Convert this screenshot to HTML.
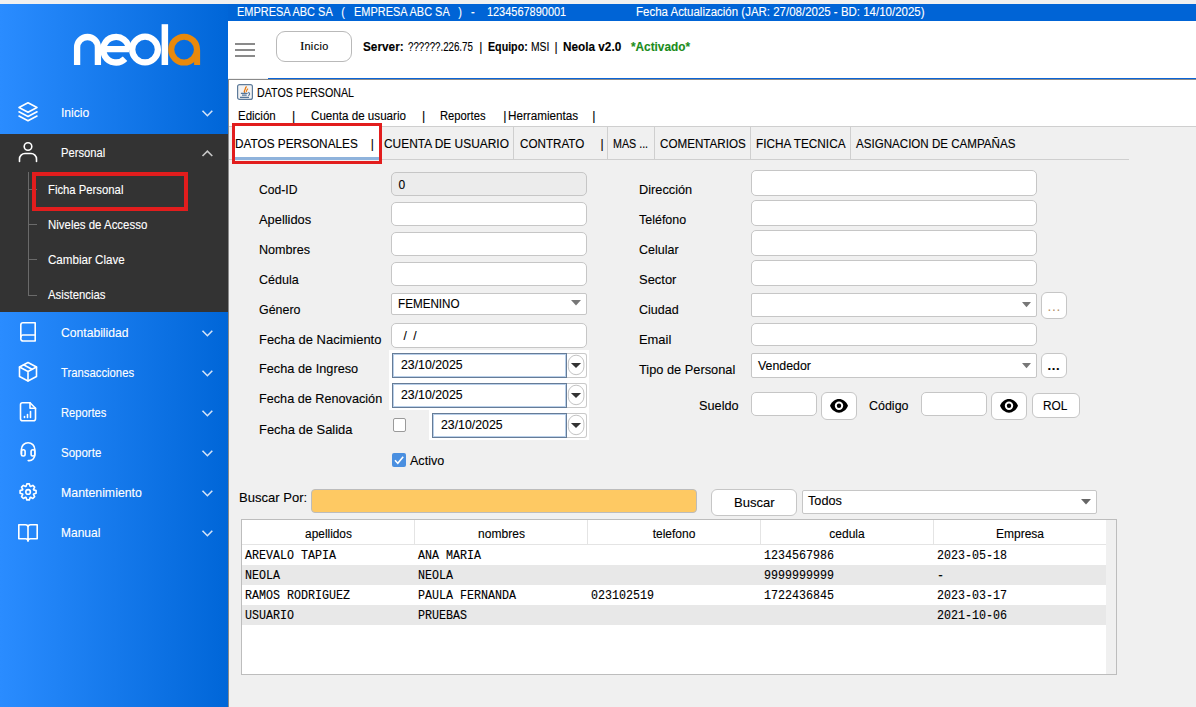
<!DOCTYPE html>
<html><head><meta charset="utf-8">
<style>
*{box-sizing:border-box;margin:0;padding:0}
html,body{width:1196px;height:707px;overflow:hidden;background:#f0f0f0;font-family:"Liberation Sans",sans-serif;position:relative}
.a{position:absolute}
.t{position:absolute;white-space:pre;line-height:1;-webkit-text-stroke:0.12px currentColor}
#sb{left:0;top:4px;width:228px;height:703px;background:linear-gradient(90deg,#2a8cff 0%,#0066d8 100%)}
#dark{left:0;top:134px;width:228px;height:178px;background:#333333}
.mi{color:#fff;font-size:12.5px}
.sub{color:#fff;font-size:12.5px}
.chev{position:absolute;width:10px;height:6px}
.lbl{font-size:13.5px;color:#111}
.inp{position:absolute;background:#fff;border:1px solid #c6c6c6;border-radius:5px}
.cmb{position:absolute;background:#fff;border:1px solid #c6c6c6;border-radius:2px}
.btn{position:absolute;background:#fff;border:1px solid #c6c6c6;border-radius:6px}
.tab{font-size:12.5px;color:#111}
.sep{position:absolute;top:127px;width:1px;height:32px;background:#cfcfcf}
.mono{font-family:"Liberation Mono",monospace;font-size:11.67px;color:#111}
.th{font-size:12.5px;color:#111}
.dp{position:absolute;background:#fff;border:1px solid #667c97;box-shadow:inset 0 0 0 1px #b9d0ea}
.dpb{position:absolute;background:#fff;border:1px solid #c9c9c9;border-left:none;border-radius:0 3px 3px 0}
</style></head><body>
<!-- top strip -->
<div class="a" style="left:0;top:0;width:1196px;height:4px;background:#f0f0f0"></div>
<!-- sidebar -->
<div id="sb" class="a"></div>
<div id="dark" class="a"></div>
<!-- logo -->
<svg class="a" style="left:0;top:0" width="228" height="80" viewBox="0 0 228 80">
 <g fill="none" stroke="#fff" stroke-width="6.3">
  <path d="M77.1 65 V47.4 A10.4 10.4 0 0 1 97.9 47.4 V65"/>
  <path d="M101.5 49.2 H129 M128.8 49.7 A12.8 12.8 0 1 0 125.05 58.75"/>
  <circle cx="145.05" cy="49.55" r="12.85"/>
 </g>
 <rect x="161.6" y="24.2" width="6.5" height="40.8" fill="#fff"/>
 <g fill="none" stroke="#e8890c" stroke-width="6.1">
  <circle cx="184.1" cy="49.6" r="12.9"/>
 </g>
 <rect x="194.1" y="49.6" width="6" height="15.4" fill="#e8890c"/>
</svg>
<!-- menu items -->
<!-- tree -->
<div class="a" style="left:28px;top:172px;width:1px;height:124px;background:#6a6a6a"></div>
<div class="a" style="left:29px;top:189px;width:8px;height:1px;background:#6a6a6a"></div>
<div class="a" style="left:29px;top:224px;width:8px;height:1px;background:#6a6a6a"></div>
<div class="a" style="left:29px;top:259px;width:8px;height:1px;background:#6a6a6a"></div>
<div class="a" style="left:29px;top:295px;width:8px;height:1px;background:#6a6a6a"></div>
<div class="a" style="left:32px;top:172px;width:156px;height:39px;border:4px solid #e21d1d"></div>
<!-- chevrons -->
<svg class="a" style="left:0;top:0" width="228" height="707" viewBox="0 0 228 707">
 <g fill="none" stroke="#d6e4f7" stroke-width="1.6">
  <path d="M202.5 110.8 L207.4 115.7 L212.3 110.8"/>
  <path d="M202.5 330.8 L207.4 335.7 L212.3 330.8"/>
  <path d="M202.5 370.8 L207.4 375.7 L212.3 370.8"/>
  <path d="M202.5 410.8 L207.4 415.7 L212.3 410.8"/>
  <path d="M202.5 450.8 L207.4 455.7 L212.3 450.8"/>
  <path d="M202.5 490.8 L207.4 495.7 L212.3 490.8"/>
  <path d="M202.5 530.8 L207.4 535.7 L212.3 530.8"/>
 </g>
 <path d="M202.5 156 L207.4 151.1 L212.3 156" fill="none" stroke="#c8c8c8" stroke-width="1.6"/>
 <g fill="none" stroke="#fff" stroke-width="1.6" stroke-linejoin="round" stroke-linecap="round">
  <!-- layers -->
  <path d="M28 102.8 L37 107.5 L28 112.2 L19 107.5 Z"/>
  <path d="M19 111.8 L28 116.5 L37 111.8"/>
  <path d="M19 116 L28 120.7 L37 116"/>
  <!-- person -->
  <circle cx="28" cy="146.5" r="3.8"/>
  <path d="M19.5 161.5 V159 A5.5 5.5 0 0 1 25 153.5 H31 A5.5 5.5 0 0 1 36.5 159 V161.5"/>
  <!-- book -->
  <path d="M23 322.8 H35.2 V341 H23 A2.2 2.2 0 0 1 20.8 338.8 V325 A2.2 2.2 0 0 1 23 322.8 Z"/>
  <path d="M20.8 337.2 A2.2 2.2 0 0 1 23 335 H35.2"/>
  <!-- box -->
  <path d="M28 362.5 L36.5 367 V376.5 L28 381 L19.5 376.5 V367 Z"/>
  <path d="M19.5 367 L28 371.5 L36.5 367 M28 371.5 V381"/>
  <path d="M23.5 364.8 L32 369.2"/>
  <!-- report -->
  <path d="M22.5 402.8 H30 L35.5 408.3 V418.8 A2 2 0 0 1 33.5 420.8 H22.5 A2 2 0 0 1 20.5 418.8 V404.8 A2 2 0 0 1 22.5 402.8 Z"/>
  <path d="M30 402.8 V408.3 H35.5"/>
  <path d="M24.5 417.5 V416.5 M27.5 417.5 V414.5 M30.5 417.5 V411.5"/>
  <!-- headset -->
  <path d="M21.4 454 V449.4 A6.7 6.7 0 0 1 34.8 449.4 V455 A5.6 5.6 0 0 1 29.2 460.6 H28.2"/>
  <rect x="21.4" y="449.8" width="3.7" height="6.2" rx="1.7"/>
  <rect x="31.1" y="449.8" width="3.7" height="6.2" rx="1.7"/>
  <!-- gear -->
  <circle cx="28.1" cy="491.9" r="2.3"/>
  <path d="M26.08 486.36 L26.83 483.90 L29.37 483.90 L30.12 486.36 L30.59 486.55 L32.86 485.35 L34.65 487.14 L33.45 489.41 L33.64 489.88 L36.10 490.63 L36.10 493.17 L33.64 493.92 L33.45 494.39 L34.65 496.66 L32.86 498.45 L30.59 497.25 L30.12 497.44 L29.37 499.90 L26.83 499.90 L26.08 497.44 L25.61 497.25 L23.34 498.45 L21.55 496.66 L22.75 494.39 L22.56 493.92 L20.10 493.17 L20.10 490.63 L22.56 489.88 L22.75 489.41 L21.55 487.14 L23.34 485.35 L25.61 486.55 Z"/>
  <!-- open book -->
  <path d="M28 526.5 V540.5 M18.8 524.8 H25.5 A2.5 2.5 0 0 1 28 527.3 A2.5 2.5 0 0 1 30.5 524.8 H37.2 V538.8 H30.5 A2.5 2.5 0 0 0 28 541.3 A2.5 2.5 0 0 0 25.5 538.8 H18.8 Z"/>
 </g>
</svg>
<!-- top blue bar on main -->
<div class="a" style="left:228px;top:4px;width:968px;height:17px;background:#0064d6"></div>
<!-- header white -->
<div class="a" style="left:228px;top:21px;width:968px;height:57px;background:#fff"></div>
<div class="a" style="left:235px;top:43px;width:20px;height:2px;background:#8a8a8a"></div>
<div class="a" style="left:235px;top:49px;width:20px;height:2px;background:#8a8a8a"></div>
<div class="a" style="left:235px;top:55px;width:20px;height:2px;background:#8a8a8a"></div>
<div class="btn" style="left:276px;top:31px;width:76px;height:31px;border-radius:9px;border-color:#b9b9b9"></div>
<!-- frame lines -->
<div class="a" style="left:268px;top:78px;width:928px;height:1px;background:#0a64d8"></div>
<div class="a" style="left:228px;top:79px;width:968px;height:1px;background:#8a8a8a"></div>
<div class="a" style="left:228px;top:79px;width:1px;height:628px;background:#8a8a8a"></div>
<div class="a" style="left:229px;top:80px;width:967px;height:46px;background:#fff"></div>
<div class="a" style="left:229px;top:126px;width:967px;height:1px;background:#cfcfcf"></div>
<div class="a" style="left:229px;top:159px;width:900px;height:1px;background:#cfcfcf"></div>
<!-- java icon -->
<svg class="a" style="left:237px;top:84px" width="16" height="16" viewBox="0 0 16 16">
 <rect x="0.6" y="0.6" width="14.8" height="14.8" rx="2" fill="#f2f2f2" stroke="#5d7b9b" stroke-width="1.2"/>
 <path d="M9.6 2.6 C8 4 8.6 5 7.6 6.4 C7 7.4 7.4 8.4 8 9" fill="none" stroke="#e87a10" stroke-width="1.3"/>
 <path d="M11 4.6 C10 5.6 9.6 6.2 9.2 7.8" fill="none" stroke="#e87a10" stroke-width="1.1"/>
 <path d="M3.9 9.4 H10.6 M5 11.1 H9.7 M3 13.4 H12 M11.3 8.3 Q14 10 11.3 11.7" fill="none" stroke="#56779a" stroke-width="1.1"/>
</svg>
<!-- tabs -->
<div class="a" style="left:232px;top:126px;width:148px;height:31px;background:#fff"></div>
<div class="a" style="left:232px;top:157px;width:148px;height:3px;background:#8fb3dc"></div>
<div class="sep" style="left:513px"></div>
<div class="sep" style="left:607px"></div>
<div class="sep" style="left:653.5px"></div>
<div class="sep" style="left:750px"></div>
<div class="sep" style="left:850px"></div>
<div class="a" style="left:232px;top:123px;width:150px;height:41px;border:3px solid #e21d1d"></div>
<!-- left labels -->
<!-- left inputs -->
<div class="inp" style="left:391px;top:172px;width:196px;height:24px;background:#ececec"></div>
<div class="inp" style="left:391px;top:202px;width:196px;height:24px"></div>
<div class="inp" style="left:391px;top:232px;width:196px;height:24px"></div>
<div class="inp" style="left:391px;top:262px;width:196px;height:24px"></div>
<div class="cmb" style="left:391px;top:292.5px;width:196px;height:22px"></div>
<svg class="a" style="left:571px;top:300px" width="11" height="6"><path d="M0 0 H10 L5 5.5 Z" fill="#777"/></svg>
<div class="inp" style="left:391px;top:322.5px;width:196px;height:25px"></div>
<!-- date pickers -->
<div class="a" style="left:389px;top:350px;width:200px;height:60px;background:#fff"></div>
<div class="a" style="left:429px;top:410px;width:160px;height:30px;background:#fff"></div>
<div class="dp" style="left:392px;top:353px;width:175px;height:24.5px"></div>
<div class="dpb" style="left:567px;top:352.5px;width:19.5px;height:25px"></div>
<div class="dp" style="left:392px;top:383px;width:175px;height:24.5px"></div>
<div class="dpb" style="left:567px;top:382.5px;width:19.5px;height:25px"></div>
<div class="dp" style="left:432px;top:413px;width:135px;height:24.5px"></div>
<div class="dpb" style="left:567px;top:412.5px;width:19.5px;height:25px"></div>
<svg class="a" style="left:566px;top:350px" width="22" height="92" viewBox="0 0 22 92">
 <g fill="none" stroke="#c4c4c4" stroke-width="1">
  <rect x="2.3" y="5.2" width="15.6" height="19.5" rx="7.8"/>
  <rect x="2.3" y="35.2" width="15.6" height="19.5" rx="7.8"/>
  <rect x="2.3" y="65.2" width="15.6" height="19.5" rx="7.8"/>
 </g>
 <g fill="#333">
  <path d="M4.9 13 H15.1 L10 18 Z"/>
  <path d="M4.9 43 H15.1 L10 48 Z"/>
  <path d="M4.9 73 H15.1 L10 78 Z"/>
 </g>
</svg>
<div class="a" style="left:392.5px;top:418px;width:13.5px;height:13.5px;border:1px solid #9a9a9a;border-radius:2px;background:#fff"></div>
<div class="a" style="left:392px;top:453px;width:14px;height:14px;border-radius:2px;background:#4a8fe0"></div>
<svg class="a" style="left:392px;top:453px" width="14" height="14"><path d="M3 7.3 L5.8 10.2 L11.2 3.8" fill="none" stroke="#fff" stroke-width="1.6"/></svg>
<!-- right labels -->
<!-- right inputs -->
<div class="inp" style="left:751px;top:170px;width:286px;height:25.5px"></div>
<div class="inp" style="left:751px;top:200px;width:286px;height:25.5px"></div>
<div class="inp" style="left:751px;top:230px;width:286px;height:25.5px"></div>
<div class="inp" style="left:751px;top:260px;width:286px;height:25.5px"></div>
<div class="cmb" style="left:751px;top:292.5px;width:286px;height:24px"></div>
<svg class="a" style="left:1022px;top:302px" width="10" height="6"><path d="M0 0 H9 L4.5 5.3 Z" fill="#777"/></svg>
<div class="btn" style="left:1041px;top:292px;width:25.5px;height:27px"></div>
<div class="inp" style="left:751px;top:322.5px;width:286px;height:23px"></div>
<div class="cmb" style="left:751px;top:352.5px;width:286px;height:25.5px"></div>
<svg class="a" style="left:1022px;top:363px" width="10" height="6"><path d="M0 0 H9 L4.5 5.3 Z" fill="#777"/></svg>
<div class="btn" style="left:1041px;top:352.5px;width:25.5px;height:25.5px"></div>
<!-- sueldo row -->
<div class="inp" style="left:751px;top:392px;width:65.5px;height:23.5px"></div>
<div class="btn" style="left:821px;top:392px;width:35.5px;height:27.5px"></div>
<div class="inp" style="left:921px;top:392px;width:65.5px;height:23.5px"></div>
<div class="btn" style="left:991px;top:392px;width:35.5px;height:27.5px"></div>
<svg class="a" style="left:829px;top:398px" width="20" height="16" viewBox="0 0 20 16">
 <path d="M1 7.8 C4.6 -1.3 15.4 -1.3 19 7.8 C15.4 16.9 4.6 16.9 1 7.8 Z" fill="#000"/>
 <circle cx="10" cy="7.8" r="4.2" fill="#fff"/><circle cx="10" cy="7.8" r="2.2" fill="#000"/>
</svg>
<svg class="a" style="left:999px;top:398px" width="20" height="16" viewBox="0 0 20 16">
 <path d="M1 7.8 C4.6 -1.3 15.4 -1.3 19 7.8 C15.4 16.9 4.6 16.9 1 7.8 Z" fill="#000"/>
 <circle cx="10" cy="7.8" r="4.2" fill="#fff"/><circle cx="10" cy="7.8" r="2.2" fill="#000"/>
</svg>
<div class="btn" style="left:1031.5px;top:392.5px;width:48px;height:25px"></div>
<!-- search -->
<div class="a" style="left:311px;top:489px;width:386px;height:24px;background:#fec963;border:1px solid #bcbcbc;border-radius:4px"></div>
<div class="btn" style="left:711px;top:489px;width:85.5px;height:26.5px"></div>
<div class="cmb" style="left:801.5px;top:490px;width:295.5px;height:24px"></div>
<svg class="a" style="left:1081px;top:499px" width="11" height="6"><path d="M0 0 H10 L5 5.5 Z" fill="#666"/></svg>
<!-- table -->
<div class="a" style="left:241px;top:519px;width:876px;height:156px;border:1px solid #bdbdbd;background:#f0f0f0"></div>
<div class="a" style="left:242px;top:520px;width:864px;height:154px;background:#fff"></div>
<div class="a" style="left:242px;top:544px;width:864px;height:1px;background:#e4e4e4"></div>
<div class="a" style="left:414px;top:520px;width:1px;height:24px;background:#e4e4e4"></div>
<div class="a" style="left:587px;top:520px;width:1px;height:24px;background:#e4e4e4"></div>
<div class="a" style="left:760px;top:520px;width:1px;height:24px;background:#e4e4e4"></div>
<div class="a" style="left:933px;top:520px;width:1px;height:24px;background:#e4e4e4"></div>
<div class="a" style="left:242px;top:565px;width:864px;height:20px;background:#e8e8e8"></div>
<div class="a" style="left:242px;top:605px;width:864px;height:20px;background:#e8e8e8"></div>
<div class="t" id="t0" style="left:60.60px;top:106.15px;font-size:13px;font-family:'Liberation Sans',sans-serif;color:#ffffff;font-weight:normal;transform:scaleX(0.9322);transform-origin:0 0;">Inicio</div>
<div class="t" id="t1" style="left:60.60px;top:145.75px;font-size:13px;font-family:'Liberation Sans',sans-serif;color:#ffffff;font-weight:normal;transform:scaleX(0.8614);transform-origin:0 0;">Personal</div>
<div class="t" id="t2" style="left:48.30px;top:182.85px;font-size:13px;font-family:'Liberation Sans',sans-serif;color:#ffffff;font-weight:normal;transform:scaleX(0.8695);transform-origin:0 0;">Ficha Personal</div>
<div class="t" id="t3" style="left:48.30px;top:217.85px;font-size:13px;font-family:'Liberation Sans',sans-serif;color:#ffffff;font-weight:normal;transform:scaleX(0.8808);transform-origin:0 0;">Niveles de Accesso</div>
<div class="t" id="t4" style="left:48.30px;top:252.95px;font-size:13px;font-family:'Liberation Sans',sans-serif;color:#ffffff;font-weight:normal;transform:scaleX(0.8920);transform-origin:0 0;">Cambiar Clave</div>
<div class="t" id="t5" style="left:48.30px;top:287.55px;font-size:13px;font-family:'Liberation Sans',sans-serif;color:#ffffff;font-weight:normal;transform:scaleX(0.8745);transform-origin:0 0;">Asistencias</div>
<div class="t" id="t6" style="left:60.66px;top:326.15px;font-size:13px;font-family:'Liberation Sans',sans-serif;color:#ffffff;font-weight:normal;transform:scaleX(0.9339);transform-origin:0 0;">Contabilidad</div>
<div class="t" id="t7" style="left:60.66px;top:366.15px;font-size:13px;font-family:'Liberation Sans',sans-serif;color:#ffffff;font-weight:normal;transform:scaleX(0.8696);transform-origin:0 0;">Transacciones</div>
<div class="t" id="t8" style="left:60.66px;top:406.15px;font-size:13px;font-family:'Liberation Sans',sans-serif;color:#ffffff;font-weight:normal;transform:scaleX(0.8588);transform-origin:0 0;">Reportes</div>
<div class="t" id="t9" style="left:60.66px;top:446.15px;font-size:13px;font-family:'Liberation Sans',sans-serif;color:#ffffff;font-weight:normal;transform:scaleX(0.8848);transform-origin:0 0;">Soporte</div>
<div class="t" id="t10" style="left:60.66px;top:486.15px;font-size:13px;font-family:'Liberation Sans',sans-serif;color:#ffffff;font-weight:normal;transform:scaleX(0.9486);transform-origin:0 0;">Mantenimiento</div>
<div class="t" id="t11" style="left:60.66px;top:526.15px;font-size:13px;font-family:'Liberation Sans',sans-serif;color:#ffffff;font-weight:normal;transform:scaleX(0.9217);transform-origin:0 0;">Manual</div>
<div class="t" id="t12" style="left:237.40px;top:6.18px;font-size:12.5px;font-family:'Liberation Sans',sans-serif;color:#ffffff;font-weight:normal;transform:scaleX(0.8774);transform-origin:0 0;">EMPRESA ABC SA   (   EMPRESA ABC SA   )   -    1234567890001</div>
<div class="t" id="t13" style="left:636.40px;top:6.18px;font-size:12.5px;font-family:'Liberation Sans',sans-serif;color:#ffffff;font-weight:normal;transform:scaleX(0.9186);transform-origin:0 0;">Fecha Actualización (JAR: 27/08/2025 - BD: 14/10/2025)</div>
<div class="t" id="t14" style="left:299.60px;top:41.29px;font-size:10.6px;font-family:'Liberation Sans',sans-serif;color:#000;font-weight:normal;transform:scaleX(1.0254);transform-origin:0 0;"><span style="font-family:'Liberation Serif',serif;font-size:13px;line-height:0">I</span><span style="letter-spacing:0.35px">nicio</span></div>
<div class="t" id="t15" style="left:363.20px;top:41.40px;font-size:12px;font-family:'Liberation Sans',sans-serif;color:#000;font-weight:bold;transform:scaleX(0.9837);transform-origin:0 0;">Server:</div>
<div class="t" id="t16" style="left:407.70px;top:41.40px;font-size:12px;font-family:'Liberation Sans',sans-serif;color:#000;font-weight:normal;transform:scaleX(0.8103);transform-origin:0 0;">??????.226.75</div>
<div class="t" id="t17" style="left:479.30px;top:41.40px;font-size:12px;font-family:'Liberation Sans',sans-serif;color:#000;font-weight:normal;">|</div>
<div class="t" id="t18" style="left:488.30px;top:41.40px;font-size:12px;font-family:'Liberation Sans',sans-serif;color:#000;font-weight:bold;transform:scaleX(0.8890);transform-origin:0 0;">Equipo:</div>
<div class="t" id="t19" style="left:531.40px;top:41.40px;font-size:12px;font-family:'Liberation Sans',sans-serif;color:#000;font-weight:normal;transform:scaleX(0.8621);transform-origin:0 0;">MSI</div>
<div class="t" id="t20" style="left:554.60px;top:41.40px;font-size:12px;font-family:'Liberation Sans',sans-serif;color:#000;font-weight:normal;">|</div>
<div class="t" id="t21" style="left:563.40px;top:41.40px;font-size:12px;font-family:'Liberation Sans',sans-serif;color:#000;font-weight:bold;transform:scaleX(0.9802);transform-origin:0 0;">Neola v2.0</div>
<div class="t" id="t22" style="left:631.00px;top:41.40px;font-size:12px;font-family:'Liberation Sans',sans-serif;color:#1a8c1a;font-weight:bold;transform:scaleX(0.9828);transform-origin:0 0;">*Activado*</div>
<div class="t" id="t23" style="left:257.10px;top:87.38px;font-size:12.5px;font-family:'Liberation Sans',sans-serif;color:#000;font-weight:normal;transform:scaleX(0.8549);transform-origin:0 0;">DATOS PERSONAL</div>
<div class="t" id="t24" style="left:237.50px;top:109.67px;font-size:12.5px;font-family:'Liberation Sans',sans-serif;color:#000;font-weight:normal;transform:scaleX(0.9195);transform-origin:0 0;">Edición</div>
<div class="t" id="t25" style="left:292.00px;top:109.67px;font-size:12.5px;font-family:'Liberation Sans',sans-serif;color:#000;font-weight:normal;">|</div>
<div class="t" id="t26" style="left:310.60px;top:109.67px;font-size:12.5px;font-family:'Liberation Sans',sans-serif;color:#000;font-weight:normal;transform:scaleX(0.9299);transform-origin:0 0;">Cuenta de usuario</div>
<div class="t" id="t27" style="left:421.90px;top:109.67px;font-size:12.5px;font-family:'Liberation Sans',sans-serif;color:#000;font-weight:normal;">|</div>
<div class="t" id="t28" style="left:440.40px;top:109.67px;font-size:12.5px;font-family:'Liberation Sans',sans-serif;color:#000;font-weight:normal;transform:scaleX(0.8988);transform-origin:0 0;">Reportes</div>
<div class="t" id="t29" style="left:503.20px;top:109.67px;font-size:12.5px;font-family:'Liberation Sans',sans-serif;color:#000;font-weight:normal;">|</div>
<div class="t" id="t30" style="left:508.10px;top:109.67px;font-size:12.5px;font-family:'Liberation Sans',sans-serif;color:#000;font-weight:normal;transform:scaleX(0.9356);transform-origin:0 0;">Herramientas</div>
<div class="t" id="t31" style="left:592.30px;top:109.67px;font-size:12.5px;font-family:'Liberation Sans',sans-serif;color:#000;font-weight:normal;">|</div>
<div class="t" id="t32" style="left:234.70px;top:137.50px;font-size:12px;font-family:'Liberation Sans',sans-serif;color:#000;font-weight:normal;transform:scaleX(0.9829);transform-origin:0 0;">DATOS PERSONALES</div>
<div class="t" id="t33" style="left:370.80px;top:137.50px;font-size:12px;font-family:'Liberation Sans',sans-serif;color:#000;font-weight:normal;">|</div>
<div class="t" id="t34" style="left:383.50px;top:137.50px;font-size:12px;font-family:'Liberation Sans',sans-serif;color:#000;font-weight:normal;transform:scaleX(0.9929);transform-origin:0 0;">CUENTA DE USUARIO</div>
<div class="t" id="t35" style="left:519.70px;top:137.50px;font-size:12px;font-family:'Liberation Sans',sans-serif;color:#000;font-weight:normal;transform:scaleX(0.9708);transform-origin:0 0;">CONTRATO</div>
<div class="t" id="t36" style="left:600.60px;top:137.50px;font-size:12px;font-family:'Liberation Sans',sans-serif;color:#000;font-weight:normal;">|</div>
<div class="t" id="t37" style="left:613.30px;top:137.50px;font-size:12px;font-family:'Liberation Sans',sans-serif;color:#000;font-weight:normal;transform:scaleX(0.8921);transform-origin:0 0;">MAS ...</div>
<div class="t" id="t38" style="left:659.60px;top:137.50px;font-size:12px;font-family:'Liberation Sans',sans-serif;color:#000;font-weight:normal;transform:scaleX(0.9700);transform-origin:0 0;">COMENTARIOS</div>
<div class="t" id="t39" style="left:756.20px;top:137.50px;font-size:12px;font-family:'Liberation Sans',sans-serif;color:#000;font-weight:normal;transform:scaleX(0.9822);transform-origin:0 0;">FICHA TECNICA</div>
<div class="t" id="t40" style="left:856.00px;top:137.50px;font-size:12px;font-family:'Liberation Sans',sans-serif;color:#000;font-weight:normal;transform:scaleX(0.9652);transform-origin:0 0;">ASIGNACION DE CAMPAÑAS</div>
<div class="t" id="t41" style="left:259.10px;top:183.24px;font-size:13.6px;font-family:'Liberation Sans',sans-serif;color:#000;font-weight:normal;transform:scaleX(0.8917);transform-origin:0 0;">Cod-ID</div>
<div class="t" id="t42" style="left:259.10px;top:213.24px;font-size:13.6px;font-family:'Liberation Sans',sans-serif;color:#000;font-weight:normal;transform:scaleX(0.9461);transform-origin:0 0;">Apellidos</div>
<div class="t" id="t43" style="left:259.10px;top:243.44px;font-size:13.6px;font-family:'Liberation Sans',sans-serif;color:#000;font-weight:normal;transform:scaleX(0.9265);transform-origin:0 0;">Nombres</div>
<div class="t" id="t44" style="left:259.10px;top:273.14px;font-size:13.6px;font-family:'Liberation Sans',sans-serif;color:#000;font-weight:normal;transform:scaleX(0.9216);transform-origin:0 0;">Cédula</div>
<div class="t" id="t45" style="left:259.10px;top:303.24px;font-size:13.6px;font-family:'Liberation Sans',sans-serif;color:#000;font-weight:normal;transform:scaleX(0.9152);transform-origin:0 0;">Género</div>
<div class="t" id="t46" style="left:259.10px;top:333.14px;font-size:13.6px;font-family:'Liberation Sans',sans-serif;color:#000;font-weight:normal;transform:scaleX(0.9529);transform-origin:0 0;">Fecha de Nacimiento</div>
<div class="t" id="t47" style="left:259.10px;top:361.94px;font-size:13.6px;font-family:'Liberation Sans',sans-serif;color:#000;font-weight:normal;transform:scaleX(0.9376);transform-origin:0 0;">Fecha de Ingreso</div>
<div class="t" id="t48" style="left:259.10px;top:391.64px;font-size:13.6px;font-family:'Liberation Sans',sans-serif;color:#000;font-weight:normal;transform:scaleX(0.9316);transform-origin:0 0;">Fecha de Renovación</div>
<div class="t" id="t49" style="left:259.10px;top:422.54px;font-size:13.6px;font-family:'Liberation Sans',sans-serif;color:#000;font-weight:normal;transform:scaleX(0.9517);transform-origin:0 0;">Fecha de Salida</div>
<div class="t" id="t50" style="left:639.20px;top:183.24px;font-size:13.6px;font-family:'Liberation Sans',sans-serif;color:#000;font-weight:normal;transform:scaleX(0.9387);transform-origin:0 0;">Dirección</div>
<div class="t" id="t51" style="left:639.20px;top:213.34px;font-size:13.6px;font-family:'Liberation Sans',sans-serif;color:#000;font-weight:normal;transform:scaleX(0.9182);transform-origin:0 0;">Teléfono</div>
<div class="t" id="t52" style="left:639.20px;top:242.74px;font-size:13.6px;font-family:'Liberation Sans',sans-serif;color:#000;font-weight:normal;transform:scaleX(0.9193);transform-origin:0 0;">Celular</div>
<div class="t" id="t53" style="left:639.20px;top:273.14px;font-size:13.6px;font-family:'Liberation Sans',sans-serif;color:#000;font-weight:normal;transform:scaleX(0.9517);transform-origin:0 0;">Sector</div>
<div class="t" id="t54" style="left:639.20px;top:303.14px;font-size:13.6px;font-family:'Liberation Sans',sans-serif;color:#000;font-weight:normal;transform:scaleX(0.9193);transform-origin:0 0;">Ciudad</div>
<div class="t" id="t55" style="left:639.20px;top:332.84px;font-size:13.6px;font-family:'Liberation Sans',sans-serif;color:#000;font-weight:normal;transform:scaleX(0.9500);transform-origin:0 0;">Email</div>
<div class="t" id="t56" style="left:639.20px;top:362.54px;font-size:13.6px;font-family:'Liberation Sans',sans-serif;color:#000;font-weight:normal;transform:scaleX(0.9417);transform-origin:0 0;">Tipo de Personal</div>
<div class="t" id="t57" style="left:398.50px;top:178.60px;font-size:12px;font-family:'Liberation Sans',sans-serif;color:#000;font-weight:normal;">0</div>
<div class="t" id="t58" style="left:398.20px;top:297.60px;font-size:12px;font-family:'Liberation Sans',sans-serif;color:#000;font-weight:normal;transform:scaleX(0.9725);transform-origin:0 0;">FEMENINO</div>
<div class="t" id="t59" style="left:403.60px;top:329.50px;font-size:12px;font-family:'Liberation Sans',sans-serif;color:#000;font-weight:normal;letter-spacing:1.5px;">/ /</div>
<div class="t" id="t60" style="left:401.20px;top:359.27px;font-size:12.5px;font-family:'Liberation Sans',sans-serif;color:#000;font-weight:normal;transform:scaleX(0.9846);transform-origin:0 0;">23/10/2025</div>
<div class="t" id="t61" style="left:401.20px;top:389.27px;font-size:12.5px;font-family:'Liberation Sans',sans-serif;color:#000;font-weight:normal;transform:scaleX(0.9846);transform-origin:0 0;">23/10/2025</div>
<div class="t" id="t62" style="left:441.20px;top:419.27px;font-size:12.5px;font-family:'Liberation Sans',sans-serif;color:#000;font-weight:normal;transform:scaleX(0.9846);transform-origin:0 0;">23/10/2025</div>
<div class="t" id="t63" style="left:410.10px;top:454.34px;font-size:13.6px;font-family:'Liberation Sans',sans-serif;color:#000;font-weight:normal;transform:scaleX(0.9235);transform-origin:0 0;">Activo</div>
<div class="t" id="t64" style="left:757.90px;top:360.48px;font-size:12.5px;font-family:'Liberation Sans',sans-serif;color:#000;font-weight:normal;transform:scaleX(0.9901);transform-origin:0 0;">Vendedor</div>
<div class="t" id="t65" style="left:699.30px;top:399.04px;font-size:13.6px;font-family:'Liberation Sans',sans-serif;color:#000;font-weight:normal;transform:scaleX(0.9355);transform-origin:0 0;">Sueldo</div>
<div class="t" id="t66" style="left:869.20px;top:399.24px;font-size:13.6px;font-family:'Liberation Sans',sans-serif;color:#000;font-weight:normal;transform:scaleX(0.9169);transform-origin:0 0;">Código</div>
<div class="t" id="t67" style="left:1043.30px;top:400.18px;font-size:12.5px;font-family:'Liberation Sans',sans-serif;color:#000;font-weight:normal;transform:scaleX(0.9493);transform-origin:0 0;">ROL</div>
<div class="t" id="t68" style="left:239.00px;top:491.44px;font-size:13.6px;font-family:'Liberation Sans',sans-serif;color:#000;font-weight:normal;transform:scaleX(0.9589);transform-origin:0 0;">Buscar Por:</div>
<div class="t" id="t69" style="left:734.20px;top:496.14px;font-size:13.6px;font-family:'Liberation Sans',sans-serif;color:#000;font-weight:normal;transform:scaleX(0.9595);transform-origin:0 0;">Buscar</div>
<div class="t" id="t70" style="left:808.30px;top:495.07px;font-size:12.5px;font-family:'Liberation Sans',sans-serif;color:#000;font-weight:normal;transform:scaleX(1.0132);transform-origin:0 0;">Todos</div>
<div class="t" id="t71" style="left:1047.80px;top:300.80px;font-size:12px;font-family:'Liberation Sans',sans-serif;color:#b08a60;font-weight:normal;letter-spacing:1.2px;">...</div>
<div class="t" id="t72" style="left:1047.50px;top:359.45px;font-size:13px;font-family:'Liberation Sans',sans-serif;color:#000;font-weight:bold;letter-spacing:0.6px;">...</div>
<div class="t" id="t73" style="left:241.50px;top:527.70px;font-size:12px;font-family:'Liberation Sans',sans-serif;color:#000;font-weight:normal;width:173px;text-align:center;transform:scaleX(0.9879);transform-origin:50% 0;">apellidos</div>
<div class="t" id="t74" style="left:414.50px;top:527.70px;font-size:12px;font-family:'Liberation Sans',sans-serif;color:#000;font-weight:normal;width:173px;text-align:center;transform:scaleX(1.0024);transform-origin:50% 0;">nombres</div>
<div class="t" id="t75" style="left:587.50px;top:527.70px;font-size:12px;font-family:'Liberation Sans',sans-serif;color:#000;font-weight:normal;width:173px;text-align:center;">telefono</div>
<div class="t" id="t76" style="left:760.50px;top:527.70px;font-size:12px;font-family:'Liberation Sans',sans-serif;color:#000;font-weight:normal;width:173px;text-align:center;">cedula</div>
<div class="t" id="t77" style="left:933.50px;top:527.70px;font-size:12px;font-family:'Liberation Sans',sans-serif;color:#000;font-weight:normal;width:173px;text-align:center;">Empresa</div>
<div class="t" id="t78" style="left:245.00px;top:548.92px;font-size:13px;font-family:'Liberation Mono',monospace;color:#000;font-weight:normal;transform:scaleX(0.8974);transform-origin:0 0;">AREVALO TAPIA</div>
<div class="t" id="t79" style="left:418.00px;top:548.92px;font-size:13px;font-family:'Liberation Mono',monospace;color:#000;font-weight:normal;transform:scaleX(0.8974);transform-origin:0 0;">ANA MARIA</div>
<div class="t" id="t80" style="left:764.00px;top:548.92px;font-size:13px;font-family:'Liberation Mono',monospace;color:#000;font-weight:normal;transform:scaleX(0.8974);transform-origin:0 0;">1234567986</div>
<div class="t" id="t81" style="left:937.00px;top:548.92px;font-size:13px;font-family:'Liberation Mono',monospace;color:#000;font-weight:normal;transform:scaleX(0.8974);transform-origin:0 0;">2023-05-18</div>
<div class="t" id="t82" style="left:245.00px;top:568.92px;font-size:13px;font-family:'Liberation Mono',monospace;color:#000;font-weight:normal;transform:scaleX(0.8974);transform-origin:0 0;">NEOLA</div>
<div class="t" id="t83" style="left:418.00px;top:568.92px;font-size:13px;font-family:'Liberation Mono',monospace;color:#000;font-weight:normal;transform:scaleX(0.8974);transform-origin:0 0;">NEOLA</div>
<div class="t" id="t84" style="left:764.00px;top:568.92px;font-size:13px;font-family:'Liberation Mono',monospace;color:#000;font-weight:normal;transform:scaleX(0.8974);transform-origin:0 0;">9999999999</div>
<div class="t" id="t85" style="left:937.00px;top:568.92px;font-size:13px;font-family:'Liberation Mono',monospace;color:#000;font-weight:normal;transform:scaleX(0.8974);transform-origin:0 0;">-</div>
<div class="t" id="t86" style="left:245.00px;top:588.92px;font-size:13px;font-family:'Liberation Mono',monospace;color:#000;font-weight:normal;transform:scaleX(0.8974);transform-origin:0 0;">RAMOS RODRIGUEZ</div>
<div class="t" id="t87" style="left:418.00px;top:588.92px;font-size:13px;font-family:'Liberation Mono',monospace;color:#000;font-weight:normal;transform:scaleX(0.8974);transform-origin:0 0;">PAULA FERNANDA</div>
<div class="t" id="t88" style="left:591.00px;top:588.92px;font-size:13px;font-family:'Liberation Mono',monospace;color:#000;font-weight:normal;transform:scaleX(0.8974);transform-origin:0 0;">023102519</div>
<div class="t" id="t89" style="left:764.00px;top:588.92px;font-size:13px;font-family:'Liberation Mono',monospace;color:#000;font-weight:normal;transform:scaleX(0.8974);transform-origin:0 0;">1722436845</div>
<div class="t" id="t90" style="left:937.00px;top:588.92px;font-size:13px;font-family:'Liberation Mono',monospace;color:#000;font-weight:normal;transform:scaleX(0.8974);transform-origin:0 0;">2023-03-17</div>
<div class="t" id="t91" style="left:245.00px;top:608.92px;font-size:13px;font-family:'Liberation Mono',monospace;color:#000;font-weight:normal;transform:scaleX(0.8974);transform-origin:0 0;">USUARIO</div>
<div class="t" id="t92" style="left:418.00px;top:608.92px;font-size:13px;font-family:'Liberation Mono',monospace;color:#000;font-weight:normal;transform:scaleX(0.8974);transform-origin:0 0;">PRUEBAS</div>
<div class="t" id="t93" style="left:937.00px;top:608.92px;font-size:13px;font-family:'Liberation Mono',monospace;color:#000;font-weight:normal;transform:scaleX(0.8974);transform-origin:0 0;">2021-10-06</div>
</body></html>
